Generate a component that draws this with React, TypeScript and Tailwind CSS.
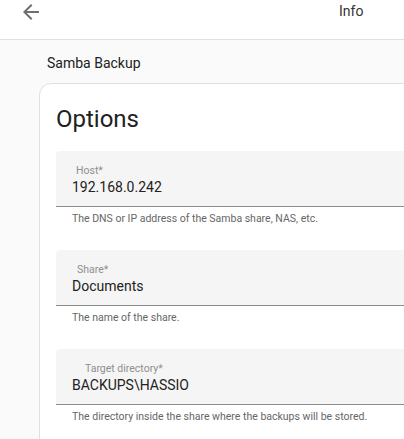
const fields = [
  { label: "Host*", indent: "pl-[20px]", value: "192.168.0.242", helper: "The DNS or IP address of the Samba share, NAS, etc." },
  { label: "Share*", indent: "pl-[21px]", value: "Documents", helper: "The name of the share." },
  { label: "Target directory*", indent: "pl-[29px]", value: "BACKUPS\\HASSIO", helper: "The directory inside the share where the backups will be stored." },
]

const App = () => {
  return (
    <div className="w-[404px] h-[439px] overflow-hidden bg-[#fafafa] font-['Roboto',sans-serif]">
      {/* Top bar */}
      <div className="h-10 bg-white border-b border-[#e0e0e0] flex items-start">
        <div className="ml-[19px] w-6 h-6 text-[#6f6f6f]">
          <svg viewBox="0 0 24 24" className="w-6 h-6" fill="currentColor">
            <path d="M20 11H7.83l5.59-5.59L12 4l-8 8 8 8 1.41-1.41L7.83 13H20v-2z" />
          </svg>
        </div>
        <div className="ml-[296px] mt-[1px] text-sm leading-5 text-[#333]">Info</div>
      </div>

      <div className="pl-[39px]">
        <div className="mt-[13px] pl-2 text-sm leading-5 text-[#212121]">Samba Backup</div>

        <div className="mt-[10px] w-[600px] rounded-xl border border-[#e0e0e0] bg-white pl-4 pt-[19px] pb-6">
          <h1 className="text-2xl leading-8 text-[#212121]">Options</h1>

          <div className="mt-4 flex flex-col">
            {fields.map((field) => (
              <div key={field.label} className="mb-[23px]">
                <div className="h-14 rounded-t bg-[#f5f5f5] border-b border-[#8c8c8c]">
                  <div className={`${field.indent} pt-3 text-[10.5px] leading-4 text-[#8f8f8f]`}>{field.label}</div>
                  <div className="-mt-[2px] pl-4 text-sm leading-5 text-[#222]">{field.value}</div>
                </div>
                <div className="mt-1 pl-4 text-[10.5px] leading-4 text-[#666]">{field.helper}</div>
              </div>
            ))}
          </div>
        </div>
      </div>
    </div>
  )
}

export default App
